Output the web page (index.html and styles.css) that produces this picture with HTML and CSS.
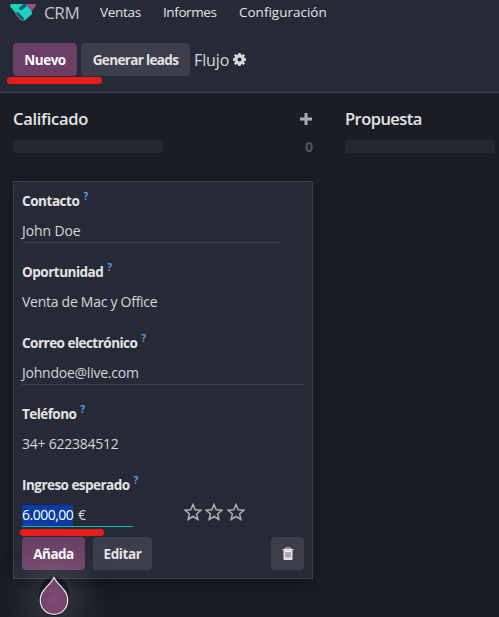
FILE: index.html
```html
<!DOCTYPE html>
<html lang="es">
<head>
<meta charset="utf-8">
<title>CRM</title>
<link rel="stylesheet" href="styles.css">
</head>
<body>
<header class="top">
  <nav class="navbar">
    <svg class="logo" width="26" height="17" viewBox="0 0 26 17">
      <path d="M14 0H24.500Q26.500 0 25.700 2L20 9L12 3Z" fill="#985184"/>
      <path d="M1.500 0H16L22 8V10L16 15.500Q13.500 17.500 11 15.500L.5 3Q-.6 .5 1.500 0Z" fill="#1ad3bb"/>
      <path d="M13.500 0H16L17 2L12.500 5.500Q9.500 7 8.500 4.200Z" fill="#005e7a"/>
      <path d="M5.600 8.800L8 8L14 14.200L12.800 16.500L11 15.500Z" fill="#005e7a"/>
      <path d="M5.500 9L13 16.400Q11 17 9.500 15.200L5.200 10Z" fill="#985184"/>
    </svg>
    <span class="brand">CRM</span>
    <a class="menu ventas">Ventas</a>
    <a class="menu informes">Informes</a>
    <a class="menu config">Configuración</a>
  </nav>
  <div class="controls">
    <button class="btn primary nuevo"><span>Nuevo</span></button>
    <button class="btn generar"><span>Generar leads</span></button>
    <span class="view">Flujo</span>
    <svg class="gear" width="13" height="13" viewBox="0 0 16 16">
      <path fill-rule="evenodd" d="M6.600 0h2.800l.5 2 1.200.5L12.900 1.300l1.900 1.900-1.300 1.700.5 1.200 2 .5v2.800l-2 .5-.5 1.200 1.300 1.700-1.900 1.900-1.800-1.200-1.200.5-.5 2H6.600l-.5-2-1.200-.5-1.800 1.200-1.900-1.900 1.300-1.700L2 9.900l-2-.5V6.600l2-.5.5-1.200-1.300-1.700 1.900-1.900 1.800 1.200L6.100 2zM8 5.500a2.500 2.500 0 1 0 0 5 2.500 2.500 0 0 0 0-5z"/>
    </svg>
  </div>
  <i class="mark mark-top"></i>
</header>
<main class="board">
  <section class="column">
    <div class="heading">
      <h2 class="calificado">Calificado</h2>
      <svg class="plus" width="12" height="12" viewBox="0 0 12 12"><path d="M4.500 0h3v4.500H12v3H7.500V12h-3V7.500H0v-3h4.500z" fill="#a9abb0"/></svg>
    </div>
    <div class="progress-row"><div class="progress"></div><b>0</b></div>
    <form class="card">
      <div class="field"><label class="contacto">Contacto<sup>?</sup></label><div class="value line short"><span>John Doe</span></div></div>
      <div class="field"><label class="oportunidad">Oportunidad<sup>?</sup></label><div class="value opportunity"><span>Venta de Mac y Office</span></div></div>
      <div class="field"><label class="correo">Correo electrónico<sup>?</sup></label><div class="value line email"><span>Johndoe@live.com</span></div></div>
      <div class="field"><label class="telefono">Teléfono<sup>?</sup></label><div class="value phone"><span>34+ 622384512</span></div></div>
      <div class="field last"><label class="ingreso">Ingreso esperado<sup>?</sup></label>
        <div class="revenue">
          <div class="value amount"><span class="selected">6.000,00</span><span class="euro">€</span></div>
          <div class="stars">
            <svg viewBox="0 0 18 18"><path d="M9 1.500l2.200 5.200 5.700.5-4.300 3.700 1.300 5.600L9 13.500l-4.900 3 1.300-5.600L1.100 7.200l5.700-.5z"/></svg>
            <svg viewBox="0 0 18 18"><path d="M9 1.500l2.200 5.200 5.700.5-4.300 3.700 1.300 5.600L9 13.500l-4.900 3 1.300-5.600L1.100 7.200l5.700-.5z"/></svg>
            <svg viewBox="0 0 18 18"><path d="M9 1.500l2.200 5.200 5.700.5-4.300 3.700 1.300 5.600L9 13.500l-4.900 3 1.300-5.600L1.100 7.200l5.700-.5z"/></svg>
          </div>
        </div>
      </div>
      <div class="actions">
        <button type="button" class="btn primary anada"><span>Añada</span></button>
        <button type="button" class="btn editar"><span>Editar</span></button>
        <button type="button" class="btn trash" aria-label="Eliminar">
          <svg width="12" height="13" viewBox="0 0 12 13"><path d="M3.500 2.500V1h5v1.500" fill="none" stroke="#e4e4e4"/><path d="M.5 2h11v1.300h-1V12q0 1-1 1h-7q-1 0-1-1V3.300h-1z" fill="#e4e4e4"/><path d="M4 5v5.500M6 5v5.500M8 5v5.500" stroke="#85528b" stroke-width=".9"/></svg>
        </button>
      </div>
      <i class="mark mark-card"></i>
      <div class="pointer">
        <svg width="30" height="40" viewBox="0 0 30 40">
          <defs><radialGradient id="drop" cx="50%" cy="60%" r="50%"><stop offset="0" stop-color="#85487a"/><stop offset="1" stop-color="#714468"/></radialGradient></defs>
          <path d="M15 1.500C13 6 8.500 9.500 5 14C2.500 17 1.300 20 1.300 24C1.300 32 7 38.300 15 38.300S28.700 32 28.700 24C28.700 20 27.500 17 25 14C21.500 9.500 17 6 15 1.500Z" fill="url(#drop)" stroke="#e8e8e8" stroke-width="1.200"/>
        </svg>
      </div>
    </form>
  </section>
  <section class="column next">
    <div class="heading"><h2 class="propuesta">Propuesta</h2></div>
    <div class="progress-row"><div class="progress"></div></div>
  </section>
</main>
</body>
</html>
```
FILE: styles.css
```css
* { box-sizing: border-box; }
body {
  margin: 0;
  width: 499px;
  height: 617px;
  overflow: hidden;
  background: #1b1d26;
  color: #d5d6d9;
  font: 14px/20px "Open Sans", "Noto Sans", sans-serif;
  white-space: nowrap;
}
.top {
  position: relative;
  height: 93px;
  background: #262a36;
  border-bottom: 1px solid #3c3e4b;
}
.navbar {
  display: flex;
  height: 43px;
  padding: 3px 0 0 10px;
}
.logo { width: 26px; height: 17px; margin-top: 1px; flex: none; }
.brand { width: 48px; margin-left: 8px; font-size: 17px; letter-spacing: -.4px; color: #c4c5c9; line-height: 20px; }
.menu { font-size: 13.500px; line-height: 19px; color: #e4e4e4; }
.ventas { width: 63px; margin-left: 8px; letter-spacing: -.3px; }
.informes { width: 76px; letter-spacing: -.4px; }
.config { letter-spacing: 0; }
.controls {
  display: flex;
  align-items: center;
  gap: 4px;
  height: 33px;
  padding-left: 13px;
}
.btn {
  display: flex;
  align-items: center;
  justify-content: center;
  flex: none;
  height: 33px;
  padding: 0;
  border: 0;
  border-radius: 4px;
  background: #3c3e4b;
  color: #e4e4e4;
  font: 700 13.500px/20px "Open Sans", "Noto Sans", sans-serif;
}
.primary { background: #6b3e66; color: #fff; }
.nuevo { width: 64px; letter-spacing: -.5px; }
.generar { width: 109px; letter-spacing: -.65px; }
.view { width: 35px; font-size: 16px; letter-spacing: -.1px; }
.gear { fill: #d5d6d9; }
.mark { position: absolute; height: 7px; border-radius: 4px; background: #e71d1c; }
.mark-top { left: 7px; top: 77px; width: 95px; }
.board { display: flex; gap: 32px; padding-left: 13px; }
.column { width: 300px; flex: none; }
.next { width: 154px; }
.heading {
  display: flex;
  align-items: center;
  justify-content: space-between;
  height: 36px;
  padding-top: 16px;
}
.plus { margin-right: 1px; }
h2 { margin: 0; font-size: 16.500px; line-height: 20px; font-weight: 600; color: #e4e4e4; }
.calificado { letter-spacing: -.3px; }
.propuesta { letter-spacing: -.55px; }
.progress-row {
  display: flex;
  align-items: center;
  justify-content: space-between;
  height: 35px;
}
.progress { width: 150px; height: 13px; background: #262831; }
.progress-row b { color: #50525a; }
.card {
  position: relative;
  width: 300px;
  height: 398px;
  margin-top: 17px;
  padding: 9px 8px;
  background: #262a36;
  border: 1px solid #3c3e4b;
  box-shadow: 0 8px 16px rgba(0,0,0,.3);
}
.field { height: 71px; }
.last { height: 62px; }
label { display: flex; height: 20px; font-size: 13.500px; font-weight: 700; color: #e4e4e4; }
sup { margin: -5px 0 0 4px; font-size: 10px; line-height: 20px; letter-spacing: 0; color: #5a9fe9; }
.value { height: 22px; margin-top: 10px; color: #d5d6d9; letter-spacing: -.2px; }
.line { border-bottom: 1px solid #3c3e4b; }
.short { width: 258px; letter-spacing: -.1px; }
.contacto { letter-spacing: -.45px; }
.oportunidad { letter-spacing: -.5px; }
.correo { letter-spacing: -.52px; }
.telefono { letter-spacing: -.55px; }
.ingreso { letter-spacing: -.53px; }
.opportunity { letter-spacing: -.27px; }
.email { letter-spacing: -.24px; }
.phone { letter-spacing: -.25px; }
.revenue { display: flex; }
.amount { display: flex; width: 111px; border-bottom: 1px solid #08bfae; letter-spacing: -.5px; }
.selected { width: 51px; height: 21px; background: #063ba8; color: #fff; }
.euro { margin-left: 5px; }
.stars { display: flex; gap: 3.400px; margin: 8px 0 0 51px; }
.stars svg { width: 18px; height: 18px; fill: none; stroke: #adb0b5; stroke-width: 1.500; }
.actions { display: flex; gap: 8px; }
.anada { width: 63px; background: linear-gradient(#6b3e66, #75466c); letter-spacing: -.5px; }
.editar { width: 59px; letter-spacing: -.4px; }
.trash { width: 33px; margin-left: auto; }
.mark-card { left: 6px; top: 347px; width: 84px; }
.pointer { position: absolute; left: 25px; top: 394px; width: 30px; height: 40px; border-radius: 50%; box-shadow: 0 0 34px 12px rgba(160,165,170,.22); }
.pointer svg { display: block; }
```
